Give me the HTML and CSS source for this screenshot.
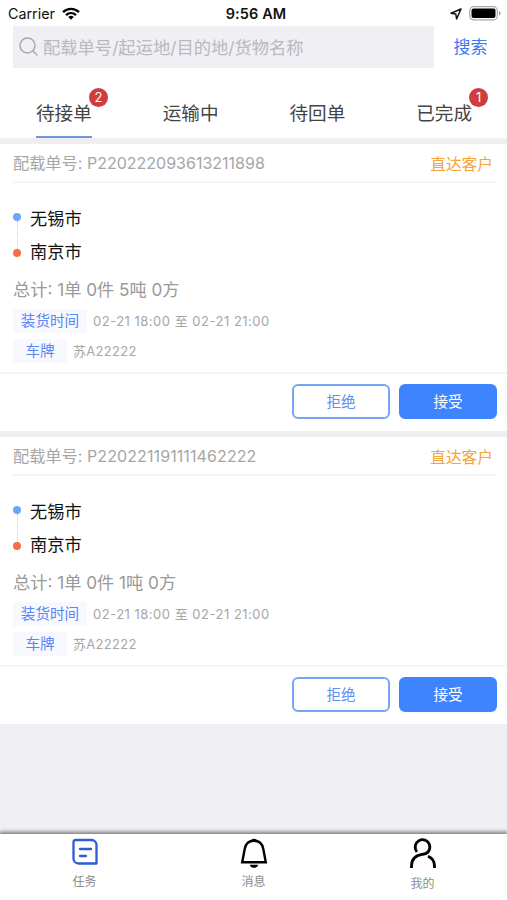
FILE: index.html
```
<!DOCTYPE html>
<html lang="zh-CN">
<head>
<meta charset="utf-8">
<title>任务</title>
<link rel="stylesheet" href="styles.css">
</head>
<body>
<div class="app">
  <div class="status">
    <div class="status-left"><span class="carrier">Carrier</span>
      <svg class="wifi" width="18" height="13" viewBox="0 0 18 13" fill="none" stroke="#000" stroke-width="2.4"><path d="M1 5.200C5.600 .7 12.400 .7 17 5.200M4 8.200c2.900-2.800 7.100-2.800 10 0"/><path d="M6.200 9.900c1.700-1.500 3.900-1.500 5.600 0L9 12.700z" fill="#000" stroke="none"/></svg>
    </div>
    <div class="clock">9:56 AM</div>
    <div class="status-right">
      <svg width="12" height="12" viewBox="0 0 12 12" fill="none" stroke="#111" stroke-width="1.5" stroke-linejoin="round"><path d="M11 1 1 5.200l4.800.8.8 5z"/></svg>
      <svg width="32" height="15" viewBox="0 0 32 15"><rect x=".7" y=".7" width="27.600" height="13.200" rx="4" fill="#fff" stroke="#aaa" stroke-width="1.200"/><rect x="2.500" y="2.500" width="24" height="9.600" rx="2"/><path d="M30 5c2 .8 2 3.800 0 4.600z" fill="#999"/></svg>
    </div>
  </div>
  <div class="search">
    <div class="field">
      <svg width="20" height="20" viewBox="0 0 20 20" fill="none" stroke="#a9a9ae" stroke-width="1.5" stroke-linecap="round"><circle cx="8.500" cy="8.500" r="7.500"/><path d="m14 14 4 4"/></svg>
      <span class="placeholder">配载单号/起运地/目的地/货物名称</span>
    </div>
    <div class="go">搜索</div>
  </div>
  <div class="tabs">
    <div class="tab active"><span class="label">待接单<i class="badge">2</i></span></div>
    <div class="tab"><span class="label">运输中</span></div>
    <div class="tab"><span class="label">待回单</span></div>
    <div class="tab"><span class="label">已完成<i class="badge">1</i></span></div>
  </div>
  <div class="list">
    <div class="card">
      <div class="head"><span>配载单号: <span class="num">P220222093613211898</span></span><span class="kind">直达客户</span></div>
      <div class="route">
        <div class="track"><i class="dot from"></i><i class="dash"></i><i class="dot to"></i></div>
        <div class="cities"><div>无锡市</div><div>南京市</div></div>
      </div>
      <div class="total">总计: 1单 0件 5吨 0方</div>
      <div class="row"><span class="tag">装货时间</span><span class="time">02-21 18:00 至 02-21 21:00</span></div>
      <div class="row"><span class="tag plate">车牌</span><span class="car">苏A22222</span></div>
      <div class="actions"><div class="btn">拒绝</div><div class="btn primary">接受</div></div>
    </div>
    <div class="card">
      <div class="head"><span>配载单号: <span class="num last">P220221191111462222</span></span><span class="kind">直达客户</span></div>
      <div class="route">
        <div class="track"><i class="dot from"></i><i class="dash"></i><i class="dot to"></i></div>
        <div class="cities"><div>无锡市</div><div>南京市</div></div>
      </div>
      <div class="total">总计: 1单 0件 1吨 0方</div>
      <div class="row"><span class="tag">装货时间</span><span class="time">02-21 18:00 至 02-21 21:00</span></div>
      <div class="row"><span class="tag plate">车牌</span><span class="car">苏A22222</span></div>
      <div class="actions"><div class="btn">拒绝</div><div class="btn primary">接受</div></div>
    </div>
  </div>
  <div class="nav">
    <div class="item">
      <svg width="30" height="32" viewBox="0 0 30 32" fill="none" stroke="#2f5bd3" stroke-width="2.300" stroke-linecap="round" stroke-linejoin="round"><path d="M5.500 3h16a5 5 0 0 1 5 5v18.500H8.500a5 5 0 0 1-5-5V5a2 2 0 0 1 2-2zM10 12h11M10 19h6"/></svg>
      <span>任务</span>
    </div>
    <div class="item">
      <svg width="30" height="32" viewBox="0 0 30 32" fill="none" stroke="#000" stroke-width="2.400"><path d="M3.200 25.300h23.600L24.300 12C23.300 6.500 20 3.800 15 3.800S6.700 6.500 5.700 12z"/><path d="M10.800 27.700h8.400c-1 4.200-7.400 4.200-8.400 0zM12 3q3-2.600 6 0z" fill="#000" stroke="none"/></svg>
      <span>消息</span>
    </div>
    <div class="item me">
      <svg width="30" height="32" viewBox="0 0 30 32" fill="none" stroke="#000" stroke-width="2.800"><path d="M9 14.800A7.300 7.300 0 1 1 15 17.300M3.500 31v-2C3.500 22 8 18.300 14 17.300c2.800-.1 5-1 6.500-2.600M20 19.300c4.200 1.700 6.500 5.200 6.500 9.700v2"/></svg>
      <span>我的</span>
    </div>
  </div>
</div>
</body>
</html>
```
FILE: styles.css
```
* { box-sizing: border-box; }
body { margin: 0; font-family: Inter, "Noto Sans CJK SC", sans-serif; background: #fff; }
i { font-style: normal; }
svg { display: block; flex: none; }
.app { width: 507px; height: 900px; display: flex; flex-direction: column; overflow: hidden; }
.status { height: 26px; display: grid; grid-template-columns: 1fr auto 1fr; align-items: center; padding: 1px 6px 0 8px; color: #111; }
.status-left { display: flex; align-items: center; gap: 7px; font-size: 14.300px; }
.clock { font-size: 14.500px; font-weight: 600; padding-left: 3px; letter-spacing: .1px; }
.status-right { display: flex; align-items: center; justify-content: flex-end; gap: 7px; }
.search { height: 42px; display: flex; padding-left: 13px; }
.field { width: 421px; background: #efeff4; display: flex; align-items: center; padding-left: 6px; gap: 4px; }
.placeholder { font-size: 17.300px; color: #b9b9be; line-height: 24px; padding-top: 1px; }
.go { flex: 1; text-align: center; font-size: 17px; line-height: 42px; color: #3e7bee; }
.tabs { height: 70px; display: flex; }
.tab { flex: 1; display: flex; justify-content: center; padding-left: 1px; }
.label { position: relative; height: 70px; line-height: 90px; font-size: 18.600px; color: #444; }
.active .label { border-bottom: 2px solid #6d98dc; }
.badge { position: absolute; left: 53px; top: 20px; width: 19px; height: 19px; border-radius: 50%; background: #cf3d3f; color: #fff; font-size: 13px; line-height: 19px; text-align: center; }
.list { flex: 1; background: #efeff4; border-top: 6px solid #efeff0; }
.card { height: 287px; background: #fff; display: flex; flex-direction: column; padding: 0 13px; margin-bottom: 6px; }
.head { height: 39px; margin-right: -2px; padding-right: 3px; border-bottom: 2px solid #f5f5f6; display: flex; justify-content: space-between; font-size: 16.200px; line-height: 39px; color: #a6a6a6; }
.num { font-size: 16px; }
.last { letter-spacing: .1px; }
.kind { color: #f7a335; font-size: 15.700px; line-height: 41px; }
.route { display: flex; height: 87px; padding-top: 19px; gap: 9px; }
.track { width: 8px; height: 44px; margin-top: 11px; display: flex; flex-direction: column; align-items: center; }
.dot { width: 8px; height: 8px; border-radius: 50%; }
.from { background: #69a7fb; }
.to { background: #fb6c3f; }
.dash { flex: 1; width: 0; border-left: 1px dotted #c8c8cc; }
.cities { font-size: 17.200px; line-height: 33px; color: #111; }
.total { height: 36px; line-height: 39px; font-size: 17.200px; color: #999; }
.row { height: 30px; display: flex; align-items: center; gap: 6px; font-size: 13px; color: #a6a6a6; }
.time, .car { line-height: 20px; margin-top: -1px; }
.time { letter-spacing: .5px; }
.car { letter-spacing: .3px; }
.tag { width: 74px; height: 24px; line-height: 25px; text-align: center; font-size: 14.600px; color: #5a86f6; background: #f7f9fe; }
.plate { width: 54px; }
.actions { flex: 1; margin: 6px -13px 0; padding: 10px 10px 0; border-top: 2px solid #f5f5f6; display: flex; justify-content: flex-end; gap: 9px; }
.btn { width: 98px; height: 35px; border: 2px solid #78a6f7; border-radius: 6px; color: #5c8ff0; font-size: 14.600px; line-height: 32px; text-align: center; }
.primary { background: #3f84ff; border-color: #3f84ff; color: #fff; }
.nav { position: relative; height: 66px; background: #fff; display: flex; box-shadow: 0 -1px 4px 1px #777; }
.item { flex: 1; display: flex; flex-direction: column; align-items: center; padding-top: 3px; font-size: 12px; line-height: 16px; color: #8b8b8b; }
.item span { margin-top: 5px; }
.item.me span { margin-top: 7px; }
```
